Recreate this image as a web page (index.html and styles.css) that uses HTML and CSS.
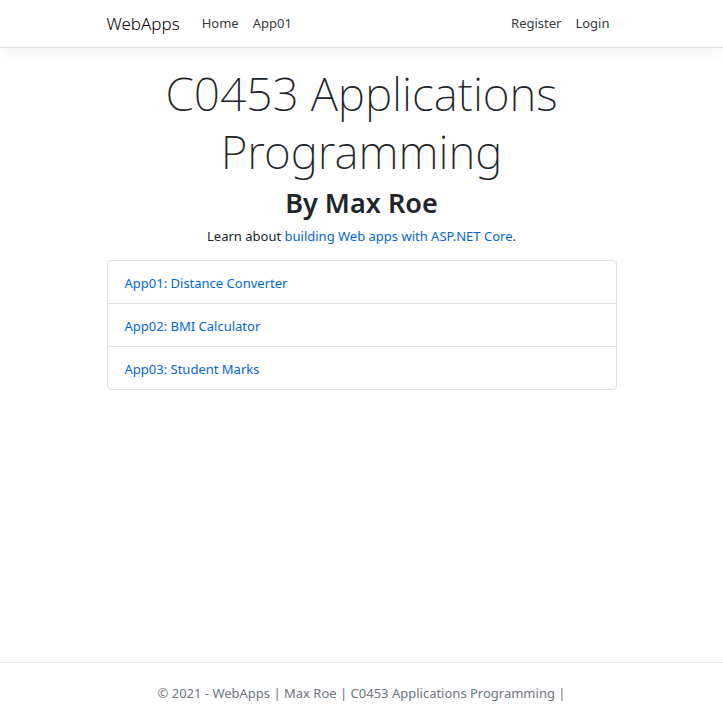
FILE: index.html
```
<!DOCTYPE html>
<html lang="en">
<head>
<meta charset="utf-8">
<meta name="viewport" content="width=device-width, initial-scale=1">
<title>WebApps</title>
<link rel="stylesheet" href="styles.css">
</head>
<body>
<header class="site-header">
  <nav class="container navbar">
    <a class="brand" href="#">WebApps</a>
    <ul class="nav-list">
      <li><a href="#">Home</a></li>
      <li><a href="#">App01</a></li>
    </ul>
    <ul class="nav-list account">
      <li><a href="#">Register</a></li>
      <li><a href="#">Login</a></li>
    </ul>
  </nav>
</header>
<main class="container main">
  <h1 class="display">C0453 Applications Programming</h1>
  <h2 class="author">By Max Roe</h2>
  <p class="intro">Learn about <a href="#">building Web apps with ASP.NET Core</a>.</p>
  <ul class="app-list">
    <li><a href="#">App01: Distance Converter</a></li>
    <li><a href="#">App02: BMI Calculator</a></li>
    <li><a href="#">App03: Student Marks</a></li>
  </ul>
</main>
<footer class="site-footer">
  <div class="container footer-text">© 2021 - WebApps | Max Roe | C0453 Applications Programming |</div>
</footer>
</body>
</html>
```
FILE: styles.css
```
* { box-sizing: border-box; }

body {
  margin: 0;
  min-height: 100vh;
  display: flex;
  flex-direction: column;
  font-family: "Noto Sans", "Open Sans", sans-serif;
  font-size: 13px;
  line-height: 21px;
  color: #212529;
  background: #fff;
}

a { color: #0366d6; text-decoration: none; }

ul { list-style: none; margin: 0; padding: 0; }

.container {
  width: 100%;
  max-width: 540px;
  margin: 0 auto;
  padding: 0 15px;
}

.site-header {
  border-bottom: 1px solid #dee2e6;
  box-shadow: 0 4px 12px rgba(0, 0, 0, 0.05);
}

.navbar { display: flex; align-items: center; height: 47px; }

.brand { font-size: 17px; font-weight: 300; color: #000; margin-right: 15px; }

.nav-list { display: flex; }

.nav-list a { display: block; padding: 7px; color: #343a40; }

.account { margin-left: auto; }

.main { flex: 1; padding-top: 16px; text-align: center; }

.display {
  margin: 0 0 7px;
  font-size: 46px;
  font-weight: 200;
  line-height: 58px;
}

.author {
  margin: 0 0 7px;
  font-size: 27px;
  font-weight: 600;
  line-height: 32px;
}

.intro { margin: 0 0 13px; }

.app-list {
  border: 1px solid #dfdfdf;
  border-radius: 4px;
  text-align: left;
}

.app-list li { padding: 12px 17px 9px; }

.app-list li + li { border-top: 1px solid #dfdfdf; }

.site-footer {
  border-top: 1px solid #dee2e6;
  line-height: 60px;
  color: #6c757d;
}

.footer-text { text-align: center; }
```
